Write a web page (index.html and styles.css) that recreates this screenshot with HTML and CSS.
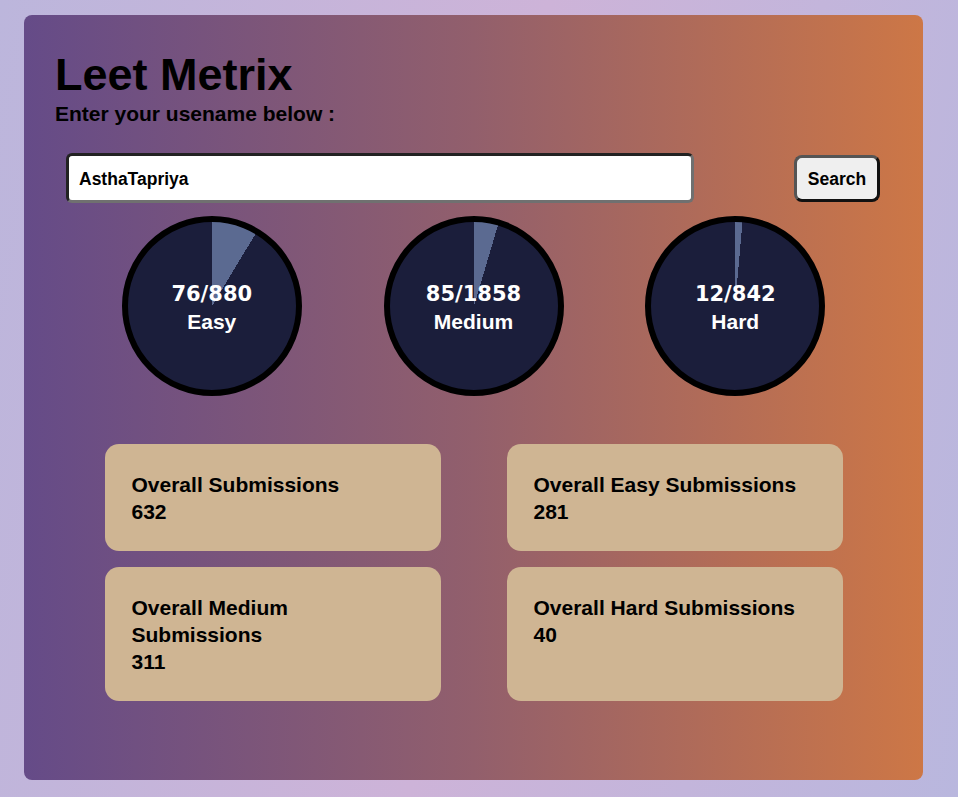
FILE: index.html
```html
<!DOCTYPE html>
<html lang="en">
<head>
<meta charset="UTF-8">
<title>Leet Metrix</title>
<link rel="stylesheet" href="styles.css">
</head>
<body>
<div class="container">
  <header class="header">
    <h1 class="title">Leet Metrix</h1>
    <p class="subtitle">Enter your usename below :</p>
  </header>
  <div class="search-row">
    <input class="user-input" type="text" value="AsthaTapriya">
    <button class="search-btn">Search</button>
  </div>
  <div class="progress-row">
    <div class="circle" style="--deg: 31.1deg">
      <span class="count">76/880</span>
      <span class="label">Easy</span>
    </div>
    <div class="circle" style="--deg: 16.5deg">
      <span class="count">85/1858</span>
      <span class="label">Medium</span>
    </div>
    <div class="circle" style="--deg: 5.1deg">
      <span class="count">12/842</span>
      <span class="label">Hard</span>
    </div>
  </div>
  <div class="cards">
    <div class="card"><p>Overall Submissions</p><p>632</p></div>
    <div class="card"><p>Overall Easy Submissions</p><p>281</p></div>
    <div class="card"><p>Overall Medium Submissions</p><p>311</p></div>
    <div class="card"><p>Overall Hard Submissions</p><p>40</p></div>
  </div>
</div>
</body>
</html>
```
FILE: styles.css
```css
* { box-sizing: border-box; }

html, body {
  margin: 0;
  height: 797px;
}

body {
  padding: 15px 35px 0 24px;
  background: linear-gradient(100deg, #bcb6dc 0%, #cdb3d8 50%, #b9b7de 100%);
  font-family: "Liberation Sans", Arial, sans-serif;
  font-weight: bold;
  overflow: hidden;
}

.container {
  width: 899px;
  height: 765px;
  border-radius: 8px;
  background: linear-gradient(to right, #654b88 0%, #925f6c 50%, #cd7746 100%);
  padding: 16px 16px;
  display: flex;
  flex-direction: column;
}

.header {
  padding: 20px 0 0 15px;
}

.title {
  margin: 0;
  font-size: 45px;
  line-height: 48px;
  color: #000;
}

.subtitle {
  margin: 0;
  font-size: 21px;
  line-height: 30px;
  color: #000;
}

.search-row {
  display: flex;
  justify-content: space-between;
  align-items: center;
  padding: 0 27px 0 26px;
  margin-top: 24px;
}

.user-input {
  width: 628px;
  height: 50px;
  border-width: 3px;
  border-style: solid;
  border-color: #222 #707070 #707070 #222;
  border-radius: 6px;
  padding: 3px 10px 0;
  font-family: "Liberation Sans", Arial, sans-serif;
  font-weight: bold;
  font-size: 17.5px;
  color: #000;
  background: #fff;
  outline: none;
}

.search-btn {
  width: 86px;
  height: 47px;
  border-width: 3px;
  border-style: solid;
  border-color: #555 #111 #111 #555;
  border-radius: 8px;
  background: #efefef;
  font-family: "Liberation Sans", Arial, sans-serif;
  font-weight: bold;
  font-size: 17.5px;
  color: #000;
  padding: 3px 0 0;
}

.progress-row {
  display: flex;
  justify-content: space-evenly;
  margin-top: 13px;
}

.circle {
  width: 180px;
  height: 180px;
  border-radius: 50%;
  border: 6px solid #000;
  padding-top: 6px;
  background: conic-gradient(#5b6a91 0deg var(--deg), #1b1e3b var(--deg) 360deg);
  display: flex;
  flex-direction: column;
  align-items: center;
  justify-content: center;
  color: #fff;
}

.count {
  font-family: "DejaVu Sans", sans-serif;
  font-weight: bold;
  font-size: 21px;
  line-height: 27px;
  margin-top: -2px;
}

.label {
  font-size: 21px;
  line-height: 27px;
}

.cards {
  display: grid;
  grid-template-columns: 336px 336px;
  column-gap: 66px;
  row-gap: 16px;
  justify-content: center;
  align-items: start;
  margin-top: 48px;
}

.card {
  background: #cfb593;
  border-radius: 14px;
  padding: 27px 27px 26px;
  min-height: 107px;
}

.card:nth-child(4) {
  min-height: 134px;
}

.card p {
  margin: 0;
  font-size: 21px;
  line-height: 27px;
  color: #000;
}
```
